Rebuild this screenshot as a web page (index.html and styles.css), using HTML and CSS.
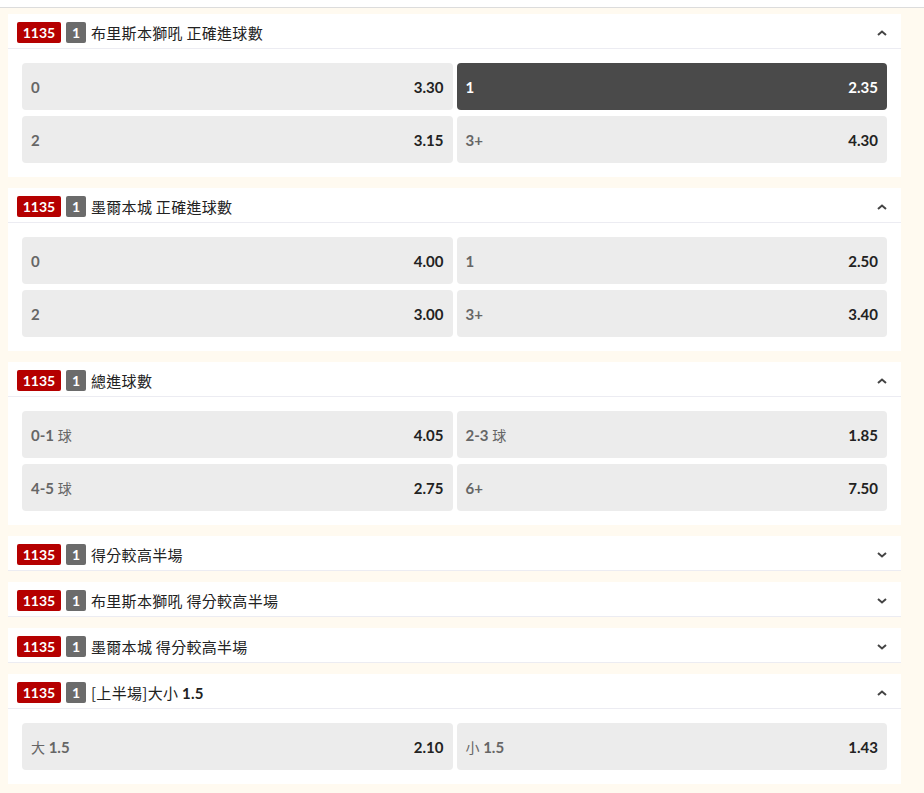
FILE: index.html
```html
<!DOCTYPE html>
<html lang="zh-Hant">
<head>
    <meta charset="UTF-8">
    <meta name="viewport" content="width=device-width, initial-scale=1.0">
    <title>1135 盤口</title>
    <link rel="stylesheet" href="styles.css">
</head>
<body>
    <div class="topbar"></div>
    <div class="markets">

        <div class="market">
            <div class="market-head">
                <span class="code">1135</span><span class="num">1</span>
                <span class="title">布里斯本獅吼 正確進球數</span>
                <svg class="chev" viewBox="0 0 10 6"><path d="M1 5 L5 1.5 L9 5"/></svg>
            </div>
            <div class="market-body">
                <div class="odd"><span class="label">0</span><span class="price">3.30</span></div>
                <div class="odd selected"><span class="label">1</span><span class="price">2.35</span></div>
                <div class="odd"><span class="label">2</span><span class="price">3.15</span></div>
                <div class="odd"><span class="label">3+</span><span class="price">4.30</span></div>
            </div>
        </div>

        <div class="market">
            <div class="market-head">
                <span class="code">1135</span><span class="num">1</span>
                <span class="title">墨爾本城 正確進球數</span>
                <svg class="chev" viewBox="0 0 10 6"><path d="M1 5 L5 1.5 L9 5"/></svg>
            </div>
            <div class="market-body">
                <div class="odd"><span class="label">0</span><span class="price">4.00</span></div>
                <div class="odd"><span class="label">1</span><span class="price">2.50</span></div>
                <div class="odd"><span class="label">2</span><span class="price">3.00</span></div>
                <div class="odd"><span class="label">3+</span><span class="price">3.40</span></div>
            </div>
        </div>

        <div class="market">
            <div class="market-head">
                <span class="code">1135</span><span class="num">1</span>
                <span class="title">總進球數</span>
                <svg class="chev" viewBox="0 0 10 6"><path d="M1 5 L5 1.5 L9 5"/></svg>
            </div>
            <div class="market-body">
                <div class="odd"><span class="label">0-1 <em>球</em></span><span class="price">4.05</span></div>
                <div class="odd"><span class="label">2-3 <em>球</em></span><span class="price">1.85</span></div>
                <div class="odd"><span class="label">4-5 <em>球</em></span><span class="price">2.75</span></div>
                <div class="odd"><span class="label">6+</span><span class="price">7.50</span></div>
            </div>
        </div>

        <div class="market">
            <div class="market-head">
                <span class="code">1135</span><span class="num">1</span>
                <span class="title">得分較高半場</span>
                <svg class="chev" viewBox="0 0 10 6"><path d="M1 1 L5 4.5 L9 1"/></svg>
            </div>
        </div>

        <div class="market">
            <div class="market-head">
                <span class="code">1135</span><span class="num">1</span>
                <span class="title">布里斯本獅吼 得分較高半場</span>
                <svg class="chev" viewBox="0 0 10 6"><path d="M1 1 L5 4.5 L9 1"/></svg>
            </div>
        </div>

        <div class="market">
            <div class="market-head">
                <span class="code">1135</span><span class="num">1</span>
                <span class="title">墨爾本城 得分較高半場</span>
                <svg class="chev" viewBox="0 0 10 6"><path d="M1 1 L5 4.5 L9 1"/></svg>
            </div>
        </div>

        <div class="market">
            <div class="market-head">
                <span class="code">1135</span><span class="num">1</span>
                <span class="title">[上半場]大小 <b>1.5</b></span>
                <svg class="chev" viewBox="0 0 10 6"><path d="M1 5 L5 1.5 L9 5"/></svg>
            </div>
            <div class="market-body">
                <div class="odd"><span class="label"><em>大</em> 1.5</span><span class="price">2.10</span></div>
                <div class="odd"><span class="label"><em>小</em> 1.5</span><span class="price">1.43</span></div>
            </div>
        </div>

    </div>
</body>
</html>
```

FILE: styles.css
```css
body {
    margin: 0;
    padding: 0;
    background-color: #fffaf0;
    font-family: Lato, "Noto Sans CJK TC", sans-serif;
    font-size: 15px;
    color: #222;
}
.topbar {
    height: 7px;
    background-color: #fff;
    border-bottom: 1px solid #dcdcdc;
}
.markets {
    width: 893px;
    margin-left: 8px;
    padding-top: 6px;
    display: flex;
    flex-direction: column;
    gap: 11px;
}
.market {
    background-color: #fff;
}
.market-head {
    box-sizing: border-box;
    height: 35px;
    display: flex;
    align-items: center;
    padding: 3px 14px 0 9px;
    border-bottom: 1px solid #ececf2;
}
.code {
    display: inline-block;
    width: 44px;
    height: 21px;
    line-height: 21px;
    text-align: center;
    background-color: #b50000;
    color: #fff;
    font-weight: bold;
    font-size: 14px;
    border-radius: 2px;
}
.num {
    display: inline-block;
    width: 20px;
    height: 21px;
    line-height: 21px;
    margin-left: 5px;
    text-align: center;
    background-color: #6b6b6b;
    color: #fff;
    font-weight: bold;
    font-size: 14px;
    border-radius: 2px;
}
.title {
    margin-left: 5px;
    font-family: "Noto Sans CJK TC", sans-serif;
    font-size: 15px;
    letter-spacing: 0.3px;
    color: #222;
    flex: 1;
}
.title b {
    font-family: Lato, sans-serif;
    font-weight: bold;
}
.chev {
    width: 10px;
    height: 6px;
    fill: none;
    stroke: #444;
    stroke-width: 2;
}
.market-body {
    display: grid;
    grid-template-columns: 1fr 1fr;
    gap: 6px 4px;
    padding: 14px;
}
.odd {
    height: 47px;
    display: flex;
    align-items: center;
    justify-content: space-between;
    padding: 0 9px;
    background-color: #ececec;
    border-radius: 4px;
}
.label {
    color: #666;
    font-weight: bold;
}
.label em {
    font-style: normal;
    font-weight: normal;
    font-family: "Noto Sans CJK TC", sans-serif;
    font-size: 14px;
}
.price {
    font-weight: bold;
    color: #222;
}
.selected {
    background-color: #4a4a4a;
}
.selected .label,
.selected .price {
    color: #fff;
}
```
